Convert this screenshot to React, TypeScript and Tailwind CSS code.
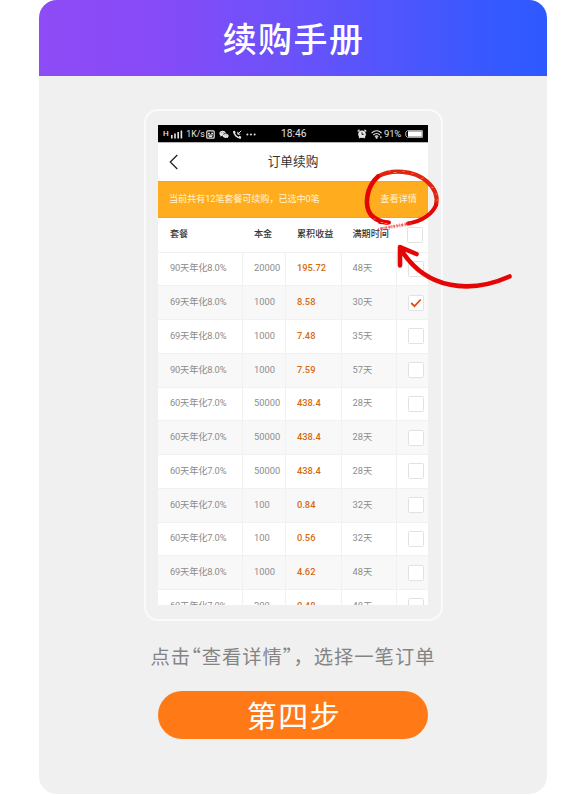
import React from "react";

type Order = {
  plan: string;
  principal: string;
  profit: string;
  term: string;
  checked?: boolean;
};

const orders: Order[] = [
  { plan: "90天年化8.0%", principal: "20000", profit: "195.72", term: "48天" },
  { plan: "69天年化8.0%", principal: "1000", profit: "8.58", term: "30天", checked: true },
  { plan: "69天年化8.0%", principal: "1000", profit: "7.48", term: "35天" },
  { plan: "90天年化8.0%", principal: "1000", profit: "7.59", term: "57天" },
  { plan: "60天年化7.0%", principal: "50000", profit: "438.4", term: "28天" },
  { plan: "60天年化7.0%", principal: "50000", profit: "438.4", term: "28天" },
  { plan: "60天年化7.0%", principal: "50000", profit: "438.4", term: "28天" },
  { plan: "60天年化7.0%", principal: "100", profit: "0.84", term: "32天" },
  { plan: "60天年化7.0%", principal: "100", profit: "0.56", term: "32天" },
  { plan: "69天年化8.0%", principal: "1000", profit: "4.62", term: "48天" },
  { plan: "60天年化7.0%", principal: "200", profit: "0.48", term: "48天" },
];

const columns = "grid grid-cols-[85px_43px_55.5px_55.5px_31px]";

function StatusBar() {
  return (
    <div className="flex h-[17px] shrink-0 items-center bg-black px-[5px] pt-[1px] text-[9px] leading-none text-[#e4e4e4]">
      <div className="flex w-[118px] items-center">
        <span className="text-[8px] font-medium">H</span>
        <svg className="ml-[2px]" width="12" height="9" viewBox="0 0 12 9" fill="#e4e4e4">
          <rect x="0" y="5" width="1.6" height="3.5" />
          <rect x="3.2" y="3.5" width="1.6" height="5" />
          <rect x="6.4" y="2" width="1.6" height="6.5" />
          <rect x="9.6" y="0.5" width="1.6" height="8" />
        </svg>
        <span className="ml-[3.5px] w-[19.5px] text-[8.8px]">1K/s</span>
        <svg width="9" height="9" viewBox="0 0 9 9" fill="none" stroke="#e4e4e4" strokeWidth="1.2">
          <rect x="0.8" y="0.8" width="7.4" height="7.4" rx="1" />
          <path d="M2 3.3h1.8M5.2 3.3H7M2 5h5M2.8 6.4h3.4" />
        </svg>
        <svg className="ml-[4px]" width="10" height="9" viewBox="0 0 11 9">
          <path d="M4 0.5C1.8.5.4 1.8.4 3.4c0 .9.5 1.7 1.2 2.2L1.3 7l1.4-.8 1.4.2C3.8 4.2 5.3 2.8 7.5 2.8 7.1 1.4 5.7.5 4 .5Z" fill="#e4e4e4" />
          <path d="M7.4 3.3c1.8 0 3.2 1.1 3.2 2.5 0 .8-.4 1.4-1 1.9l.2 1-1.1-.6c-2.4.6-4.5-.5-4.5-2.3 0-1.4 1.4-2.5 3.2-2.5Z" fill="#e4e4e4" />
          <path d="M2.7 2.4h.7M5 2.4h.7M6.2 5h.6M8.4 5H9" stroke="#111" strokeWidth=".8" />
        </svg>
        <svg className="ml-[4px]" width="9" height="9" viewBox="0 0 9 9" fill="none" stroke="#e4e4e4">
          <path d="M1 1.2C1 5 4 8 7.8 7.9" strokeWidth="1.7" />
          <path d="M.9 1 1.6 3M5.9 6.8l2 .9" strokeWidth="2.2" />
          <path d="M8.2.8 4.9 4.1M4.8 1.8v2.4h2.4" strokeWidth="1" />
        </svg>
        <svg className="ml-[4px]" width="10" height="3" viewBox="0 0 10 3" fill="#e4e4e4">
          <circle cx="1.4" cy="1.5" r="1" />
          <circle cx="5" cy="1.5" r="1" />
          <circle cx="8.6" cy="1.5" r="1" />
        </svg>
      </div>
      <span className="w-[76px] pt-[1px] text-[10.2px]">18:46</span>
      <svg width="10" height="10" viewBox="0 0 10 10">
        <circle cx="5" cy="5.2" r="3.8" fill="#e4e4e4" />
        <path d="M.7 2.4 2.5.8M9.3 2.4 7.5.8M2.2 9l1-1M7.8 9l-1-1" stroke="#e4e4e4" strokeWidth="1.3" />
        <path d="M5 3.2v2.2h1.8" stroke="#111" fill="none" strokeWidth=".9" />
      </svg>
      <svg className="ml-[4px]" width="12" height="9" viewBox="0 0 12 9" fill="none" stroke="#e4e4e4" strokeWidth="1.2">
        <path d="M.6 3.2C3.6.2 7.6.2 10.6 3.2M2.3 5c2-2 4.7-2 6.7 0M3.9 6.6c1-1 2.4-1 3.4 0" />
        <circle cx="5.6" cy="7.7" r=".5" fill="#e4e4e4" />
        <path d="M9.8 6.2v2" />
      </svg>
      <span className="ml-[1px] w-[21px] text-[9.5px] tracking-[-0.2px]">91%</span>
      <svg width="18" height="8" viewBox="0 0 18 8">
        <path d="M2.5.6h14.9v6.8H2.5L.8 5.8V2.2Z" fill="none" stroke="#b5b5b5" />
        <rect x="3" y="1.3" width="13.8" height="5.4" fill="#fff" />
      </svg>
    </div>
  );
}

function Box({ checked }: { checked?: boolean }) {
  return (
    <span className="flex size-[16px] items-center justify-center rounded-[1.5px] border border-[#e2e2e2] bg-white">
      {checked && (
        <svg width="12" height="12" viewBox="0 0 12 12" fill="none" stroke="#e2500c" strokeWidth="1.8">
          <path d="m1.2 6 3.3 3.2L10.8 2.5" />
        </svg>
      )}
    </span>
  );
}

function OrderRow({ order, striped }: { order: Order; striped: boolean }) {
  const cell = "flex items-center border-r border-[#f1f1f1] pb-[1px] pl-[11px]";
  return (
    <div
      className={`${columns} h-[33.75px] shrink-0 border-t border-[#f1f1f1] text-[9.3px] whitespace-nowrap text-[#8c8c8c] ${
        striped ? "bg-[#f8f8f8]" : "bg-white"
      }`}
    >
      <div className="flex items-center border-r border-[#f1f1f1] pb-[1px] pl-[12px] tracking-[-0.2px]">{order.plan}</div>
      <div className={cell}>{order.principal}</div>
      <div className={`${cell} font-medium text-[#d66b12]`}>{order.profit}</div>
      <div className={cell}>{order.term}</div>
      <div className="flex items-center pl-[11px]">
        <Box checked={order.checked} />
      </div>
    </div>
  );
}

function PhoneScreen() {
  return (
    <div className="flex h-[480px] w-[270px] flex-col overflow-hidden bg-white font-[Roboto,'Noto_Sans_CJK_SC',sans-serif]">
      <StatusBar />
      <div className="relative flex h-[39px] shrink-0 items-center justify-center border-t border-[#b8b8b8] text-[12.7px] text-[#333]">
        <svg className="absolute top-[11px] left-[10px]" width="12" height="16" viewBox="0 0 12 16" fill="none" stroke="#222" strokeWidth="1.3">
          <path d="M9.3 1 2.3 8l7 7" />
        </svg>
        订单续购
      </div>
      <div className="flex h-[37px] shrink-0 items-center justify-between border-y border-[#f5a31a] bg-[#ffac1e] pr-[11px] pb-[1px] pl-[11px] text-[9.2px] text-[#fff4d8]">
        <span className="tracking-[-0.15px]">当前共有12笔套餐可续购，已选中0笔</span>
        <span>查看详情</span>
      </div>
      <div className={`${columns} h-[33.5px] shrink-0 items-center text-[9.1px] font-medium whitespace-nowrap text-[#333]`}>
        <span className="pl-[12px]">套餐</span>
        <span className="pl-[11px]">本金</span>
        <span className="pl-[11px]">累积收益</span>
        <span className="pl-[11px]">满期时间</span>
        <span className="pl-[10px]">
          <Box />
        </span>
      </div>
      {orders.map((order, i) => (
        <OrderRow key={i} order={order} striped={i % 2 === 1} />
      ))}
    </div>
  );
}

/* Hand-drawn brush circle and arrow laid over the phone screen. */
function Annotation() {
  return (
    <svg className="pointer-events-none absolute top-[48px] left-[210px]" width="160" height="140" viewBox="356 159 160 140" fill="none" strokeLinecap="round" strokeLinejoin="round">
      <path d="M378 176.500C391 169 414 170 427 181.500C435 188.500 438 197 436 205" stroke="#df2410" strokeWidth="4.200" />
      <path d="M378 176.500C366 187 364 206 371 215C375 219 381 222 387 222.500" stroke="#e50505" strokeWidth="4.600" />
      <path d="M436 205C433 213 423 221 408 223.500" stroke="#e50505" strokeWidth="4" />
      <path d="M380 222 389 222.500" stroke="#e50505" strokeWidth="4" />
      <path d="M378 229.500C386 229 393 226 411 223.500" stroke="#ee4b40" strokeWidth="4" strokeDasharray="1.200 1.500" strokeLinecap="butt" opacity=".5" />
      <path d="M380 228.500C390 227 396 226 410 223.500" stroke="#e9271d" strokeWidth="2" strokeDasharray="3 1.200" strokeLinecap="butt" opacity=".55" />
      <path d="M389 170.900h1M394 172.500h2M403 171.500h1M412 173.500h1M422 178h1M432 187.500h1M436 194h1M437 200h1M374 219h1M381 222.500h2M385 223.500h2M428 212h1" stroke="#ffb08f" strokeWidth=".7" />
      <path d="M509.500 276.500C470 294 425 290 400 248M400 265.500V247L416.500 254" stroke="#e50505" strokeWidth="4.600" />
    </svg>
  );
}

export default function App() {
  return (
    <main className="h-[795px] w-[564px] overflow-hidden bg-white pl-[39px] font-['Noto_Sans_CJK_SC',sans-serif]">
      <section className="flex h-[794px] w-[508px] flex-col items-center overflow-hidden rounded-[18px] bg-[#f0f0f0]">
        <header className="flex h-[76px] w-full shrink-0 items-center justify-center bg-[linear-gradient(90deg,#8e4bf6_0%,#874bf8_23%,#6952fa_51%,#3459ff_91%,#2e59ff_100%)]">
          <h1 className="pb-[1px] pl-[1px] text-[34px] leading-none font-medium tracking-[1.4px] text-white">续购手册</h1>
        </header>
        <div className="relative mt-[33px] flex h-[512px] w-[299px] shrink-0 justify-center rounded-[14px] border-2 border-[#fafafa] pt-[14px]">
          <PhoneScreen />
          <Annotation />
        </div>
        <p className="mt-[22px] flex h-[28px] items-center text-[19.3px] leading-none tracking-[1px] whitespace-nowrap text-[#848484]">
          <span>点击</span>
          <span className="[font-feature-settings:'halt']">“</span>
          <span>查看详情”，选择一笔订单</span>
        </p>
        <div className="mt-[20px] flex h-[48px] w-[270px] shrink-0 items-center justify-center rounded-full bg-[#ff7a16] pb-[2px] pl-[2px] text-[30px] leading-none tracking-[1.5px] text-white">
          第四步
        </div>
      </section>
    </main>
  );
}
